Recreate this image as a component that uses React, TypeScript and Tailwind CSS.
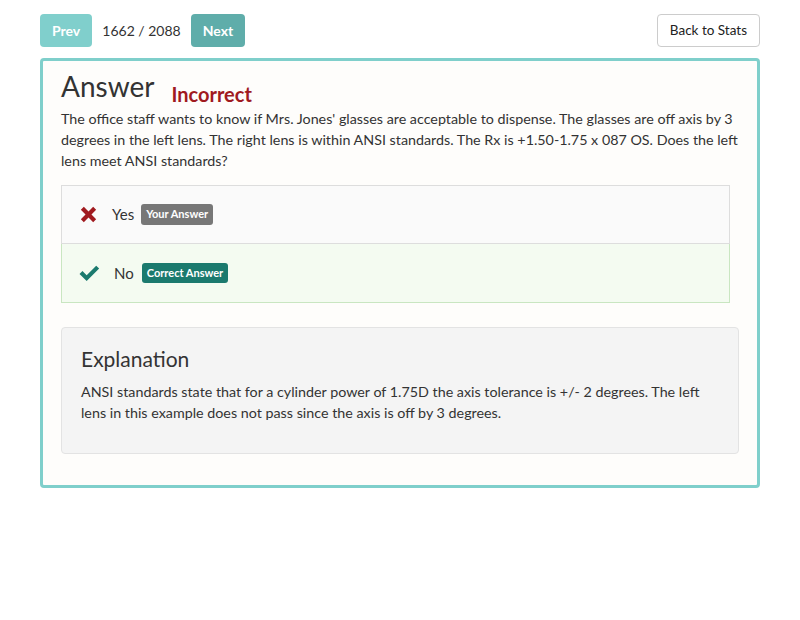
import React from 'react';

const font = { fontFamily: 'Lato, "Open Sans", sans-serif' };

function Cross() {
  return (
    <svg width="17" height="17" viewBox="0 0 16 16" className="shrink-0">
      <path d="M0.8 3.6 3.6 0.8 8 5.2 12.4 0.8 15.2 3.6 10.8 8 15.2 12.4 12.4 15.2 8 10.8 3.6 15.2 0.8 12.4 5.2 8Z" fill="#a01a1f" />
    </svg>
  );
}

function Check() {
  return (
    <svg width="21" height="17" viewBox="0 0 20 16" className="shrink-0">
      <path d="M0.5 8.4 3.3 5.6 7.3 9.6 16.4 0.5 19.2 3.3 7.3 15.2Z" fill="#1b7a6e" />
    </svg>
  );
}

export default function App() {
  return (
    <div className="min-h-screen bg-white text-[#333]" style={font}>
      <div className="px-10 pt-[14px]">
        <div className="flex items-center justify-between">
          <div className="flex items-center">
            <button className="h-[33px] px-[12px] rounded bg-[#80cfcc] text-white font-bold text-[14px]">Prev</button>
            <span className="mx-[10px] text-[14px] text-[#333]">1662 / 2088</span>
            <button className="h-[33px] px-[12px] rounded bg-[#5fadaa] text-white font-bold text-[14px]">Next</button>
          </div>
          <button className="h-[33px] px-[12px] rounded border border-[#ccc] bg-white text-[13.5px] text-[#222]">Back to Stats</button>
        </div>

        <div className="mt-[11px] border-[3px] border-[#7fcfcb] rounded bg-[#fefdfb] px-[18px] pt-[8px] pb-[31px]">
          <div className="flex items-end">
            <h1 className="text-[28px] leading-[34px] text-[#333]">Answer</h1>
            <span className="ml-[17px] mb-[-6px] text-[20px] font-bold text-[#a01a1f]">Incorrect</span>
          </div>
          <p className="mt-[5px] text-[14.3px] leading-[21px] text-[#333]">
            The office staff wants to know if Mrs. Jones' glasses are acceptable to dispense. The glasses are off axis by 3 degrees in the left lens. The right lens is within ANSI standards. The Rx is +1.50-1.75 x 087 OS. Does the left lens meet ANSI standards?
          </p>

          <div className="mt-[14px] mr-[9px]">
            <div className="h-[59px] flex items-center pl-[18px] bg-[#fafafa] border border-[#ddd]">
              <Cross />
              <span className="ml-[15px] text-[15px]">Yes</span>
              <span className="ml-[7px] px-[5px] py-[2px] rounded-[3px] bg-[#777] text-white text-[11px] font-bold">Your Answer</span>
            </div>
            <div className="h-[59px] flex items-center pl-[17px] bg-[#f4fbf1] border border-t-0 border-[#c9e6c1]">
              <Check />
              <span className="ml-[14px] text-[15px]">No</span>
              <span className="ml-[8px] px-[5px] py-[2px] rounded-[3px] bg-[#1b7a6e] text-white text-[11px] font-bold">Correct Answer</span>
            </div>
          </div>

          <div className="mt-[24px] rounded border border-[#e3e3e3] bg-[#f4f4f4] px-[19px] pt-[17px] pb-[30px]">
            <h2 className="text-[21px] leading-[28px] text-[#333]">Explanation</h2>
            <p className="mt-[8px] text-[14.3px] leading-[21px] text-[#333]">
              ANSI standards state that for a cylinder power of 1.75D the axis tolerance is +/- 2 degrees. The left lens in this example does not pass since the axis is off by 3 degrees.
            </p>
          </div>
        </div>
      </div>
    </div>
  );
}
